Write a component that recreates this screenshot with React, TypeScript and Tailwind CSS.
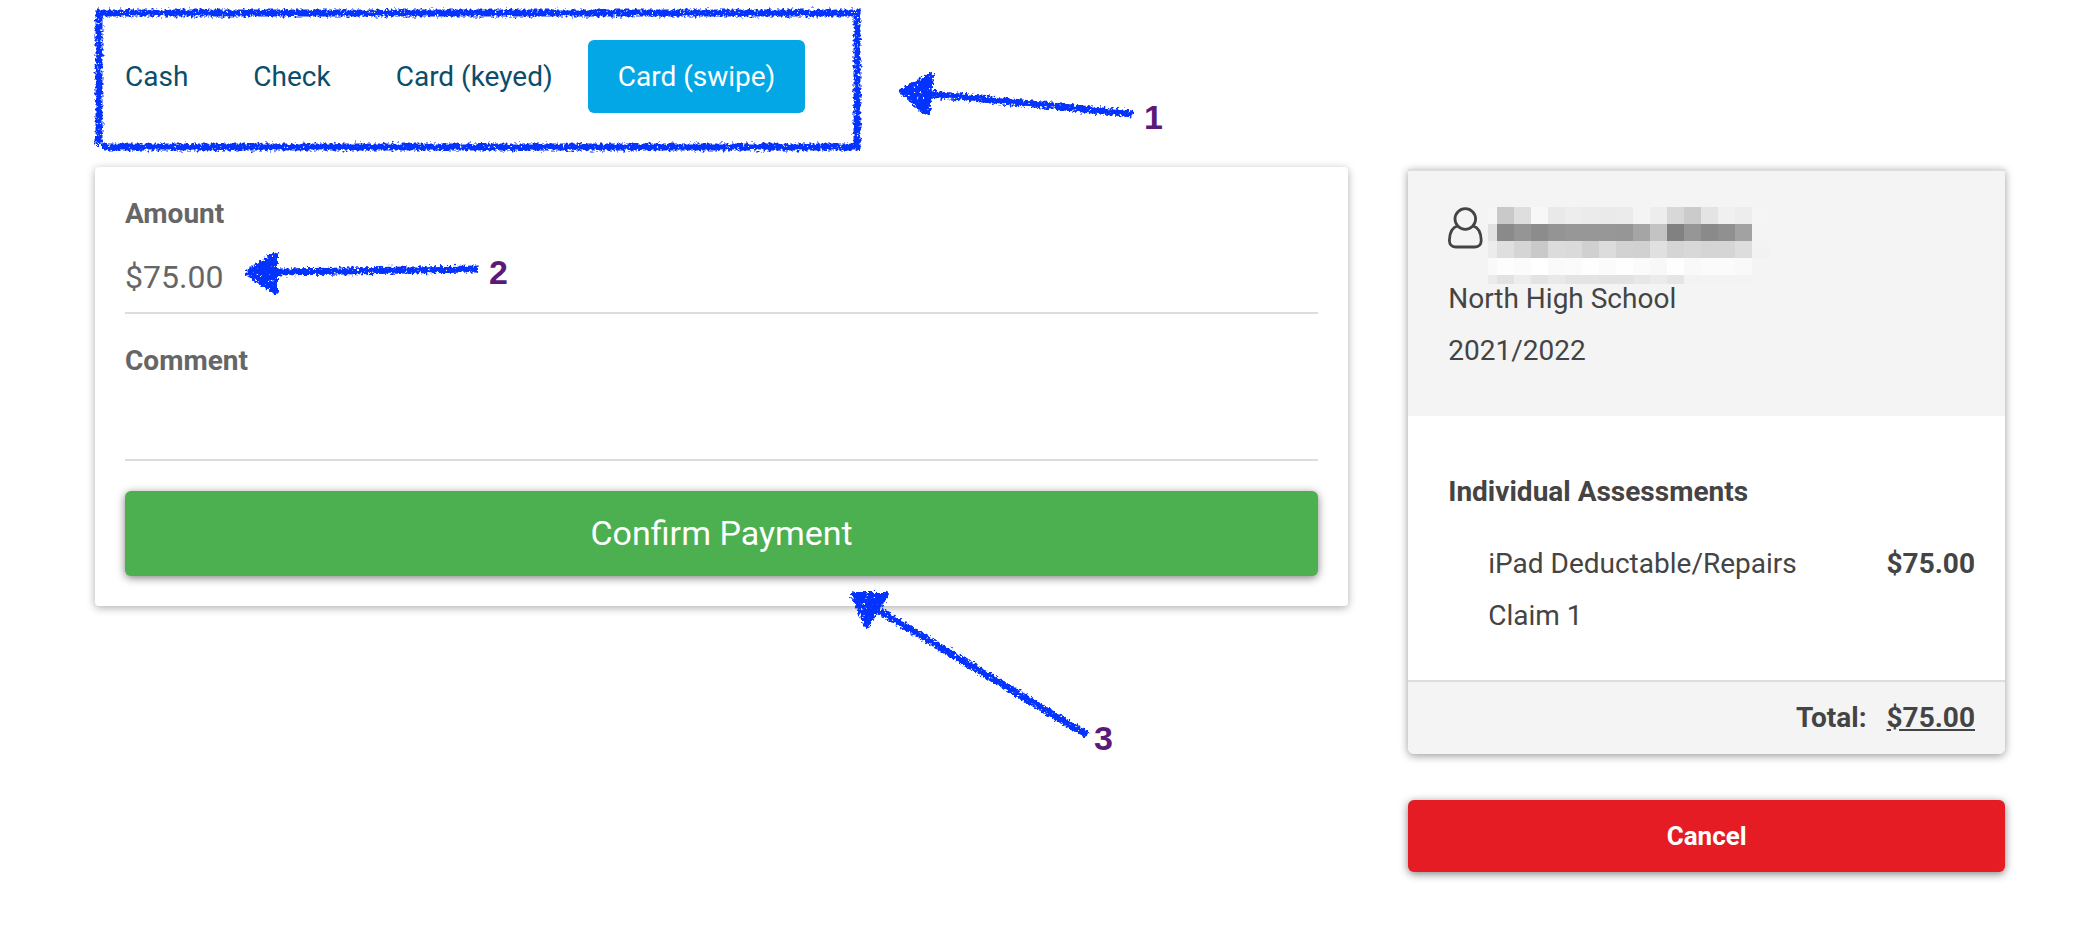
import { useState } from 'react';

const methods = ['Cash', 'Check', 'Card (keyed)', 'Card (swipe)'];

// Gray levels for the redacted student name, one entry per row of blocks
const mosaicRows: Array<{ y: number; height: number; cells: string[] }> = [
  {
    y: 0,
    height: 17,
    cells: ['#f6f6f6', '#c9c9c9', '#dedede', '#f7f7f7', '#e9e9e9', '#ededed', '#ebebeb', '#eaeaea', '#ebebeb', '#f4f4f4', '#ededed', '#d8d8d8', '#cbcbcb', '#e4e4e4', '#f0f0f0', '#ededed', '#f5f5f5'],
  },
  {
    y: 17,
    height: 17,
    cells: ['#e1e1e1', '#8a8a8a', '#959595', '#8c8c8c', '#949494', '#979797', '#979797', '#979797', '#969696', '#a5a5a5', '#c3c3c3', '#818181', '#969696', '#8a8a8a', '#909090', '#a2a2a2', '#f4f4f4'],
  },
  {
    y: 34,
    height: 17,
    cells: ['#ececec', '#dfdfdf', '#d5d5d5', '#c9c9c9', '#dcdcdc', '#dadada', '#d0d0d0', '#dcdcdc', '#d2d2d2', '#d1d1d1', '#e0e0e0', '#d5d5d5', '#d8d8d8', '#d5d5d5', '#d5d5d5', '#dddddd', '#f2f2f2'],
  },
  {
    y: 51,
    height: 17,
    cells: ['#f9f9f9', '#fdfdfd', '#fbfbfb', '#ffffff', '#fafafa', '#fbfbfb', '#fefefe', '#fbfbfb', '#fefefe', '#fbfbfb', '#f8f8f8', '#fefefe', '#f9f9f9', '#fbfbfb', '#fbfbfb', '#f9f9f9', '#f4f4f4'],
  },
  {
    y: 68,
    height: 9,
    cells: ['#ebebeb', '#e2e2e2', '#ededed', '#e3e3e3', '#e9e9e9', '#e4e4e4', '#e4e4e4', '#e2e2e2', '#e2e2e2', '#e7e7e7', '#ebebeb', '#e5e5e5', '#f3f3f3', '#f3f3f3', '#f3f3f3', '#f3f3f3', '#f4f4f4'],
  },
];

function UserIcon() {
  return (
    <svg className="shrink-0" width="36" height="42" viewBox="0 0 36 42" fill="none" stroke="#444" strokeWidth="2.8">
      <circle cx="17.3" cy="12" r="10.3" />
      <path d="M9.6 19 C4 20.5 1.6 26 1.4 33 C1.3 37.4 3.6 40 7.6 40 H27 C31 40 33.3 37.4 33.2 33 C33 26 30.6 20.5 25 19" />
    </svg>
  );
}

function RedactedName() {
  return (
    <svg className="shrink-0" width="281" height="77" viewBox="0 0 281 77" shapeRendering="crispEdges" role="img" aria-label="Student name hidden">
      {mosaicRows.map((row) =>
        row.cells.map((fill, i) => (
          <rect
            key={`${row.y}-${i}`}
            x={i === 0 ? 0 : 9 + (i - 1) * 17}
            y={row.y}
            width={i === 0 ? 9 : 17}
            height={row.height}
            fill={fill}
          />
        ))
      )}
    </svg>
  );
}

// Chalk style callouts laid over the form
function Annotations() {
  return (
    <svg className="pointer-events-none absolute top-0 left-0" width="1200" height="780" viewBox="0 0 1200 780" aria-hidden="true">
      <defs>
        <filter id="chalk" filterUnits="userSpaceOnUse" x="0" y="0" width="1200" height="780" colorInterpolationFilters="sRGB">
          <feTurbulence type="fractalNoise" baseFrequency="0.35" numOctaves="3" seed="4" result="noise" />
          <feDisplacementMap in="SourceGraphic" in2="noise" scale="7" xChannelSelector="R" yChannelSelector="G" result="rough" />
          <feColorMatrix in="noise" type="matrix" values="0 0 0 0 0  0 0 0 0 0  0 0 0 0 0  0 0 -9 0 7.2" result="grain" />
          <feComposite in="rough" in2="grain" operator="in" />
        </filter>
      </defs>
      <g filter="url(#chalk)" stroke="#0432ff" fill="none" strokeWidth="7">
        <path d="M96 13 H860 M857 10 V150 M860 147 H101 M99 10 V145" />
        <path d="M930 94 L1133 114" />
        <path d="M276 272 L478 269" />
        <path d="M878 610 L1087 735" />
        <g fill="#0432ff" strokeWidth="6" strokeLinejoin="round">
          <path d="M902 91 L931 76 L927 113 Z" />
          <path d="M248 273 L275 255 L275 291 Z" />
          <path d="M854 595 L886 595 L867 625 Z" />
        </g>
      </g>
      <g className="font-['Liberation_Sans',Arial,sans-serif] text-[34px] font-bold" fill="#5b1a78">
        <text x="1144" y="129">1</text>
        <text x="489" y="284">2</text>
        <text x="1094" y="750">3</text>
      </g>
    </svg>
  );
}

export default function App() {
  const [method, setMethod] = useState('Card (swipe)');
  const [amount, setAmount] = useState('$75.00');
  const [comment, setComment] = useState('');

  return (
    <div className="relative min-h-screen bg-white pt-10 pr-[71px] pb-10 pl-[95px] font-[Roboto,sans-serif] text-[28px] text-[#444]">
      {/* Payment methods */}
      <nav className="flex gap-[5px]">
        {methods.map((name) => (
          <button
            key={name}
            type="button"
            onClick={() => setMethod(name)}
            className={`h-[73px] rounded-md px-[30px] ${
              method === name ? 'bg-[#03a7e6] text-white' : 'text-[#0a4e6b]'
            }`}
          >
            {name}
          </button>
        ))}
      </nav>

      <div className="mt-[54px] grid grid-cols-[minmax(0,2.1fr)_minmax(0,1fr)] items-start gap-[60px]">
        {/* Payment form */}
        <form
          onSubmit={(e) => e.preventDefault()}
          className="flex flex-col gap-[30px] rounded-sm bg-white p-[30px] shadow-[0_2px_8px_rgba(0,0,0,0.32)]"
        >
          <div className="flex flex-col gap-[10px]">
            <label htmlFor="amount" className="leading-[34px] font-bold text-[#666]">Amount</label>
            <input
              id="amount"
              value={amount}
              onChange={(e) => setAmount(e.target.value)}
              className="h-[73px] border-b-2 border-[#ddd] text-[32px] text-[#666] outline-none"
            />
          </div>
          <div className="flex flex-col gap-[10px]">
            <label htmlFor="comment" className="leading-[34px] font-bold text-[#666]">Comment</label>
            <input
              id="comment"
              value={comment}
              onChange={(e) => setComment(e.target.value)}
              className="h-[73px] border-b-2 border-[#ddd] text-[32px] text-[#666] outline-none"
            />
          </div>
          <button
            type="submit"
            className="h-[85px] rounded-md bg-[#4caf50] text-[34px] text-white shadow-[0_2px_8px_rgba(0,0,0,0.5)]"
          >
            Confirm Payment
          </button>
        </form>

        {/* Order summary */}
        <aside className="mt-0.5">
          <section className="overflow-hidden rounded-b-md bg-white leading-[52px] shadow-[0_2px_8px_rgba(0,0,0,0.4)]">
            <header className="border-t-2 border-[#ddd] bg-[#f4f4f4] px-10 pt-9 pb-[39px]">
              <div className="flex h-[66px] items-start gap-1">
                <UserIcon />
                <RedactedName />
              </div>
              <p>North High School</p>
              <p>2021/2022</p>
            </header>
            <div className="pt-[50px] pr-[30px] pb-[38px] pl-10">
              <h2 className="font-bold">Individual Assessments</h2>
              <ul className="mt-5 pl-10">
                <li className="flex justify-between">
                  <span>
                    iPad Deductable/Repairs
                    <br />
                    Claim 1
                  </span>
                  <span className="font-bold">$75.00</span>
                </li>
              </ul>
            </div>
            <footer className="flex justify-end gap-5 border-t-2 border-[#ddd] bg-[#f4f4f4] px-[30px] py-[10px] font-bold">
              <span>Total:</span>
              <span className="underline">$75.00</span>
            </footer>
          </section>
          <button
            type="button"
            className="mt-[46px] h-[72px] w-full rounded-md bg-[#e51c23] text-[26px] font-bold text-white shadow-[0_2px_8px_rgba(0,0,0,0.5)]"
          >
            Cancel
          </button>
        </aside>
      </div>

      <Annotations />
    </div>
  );
}
